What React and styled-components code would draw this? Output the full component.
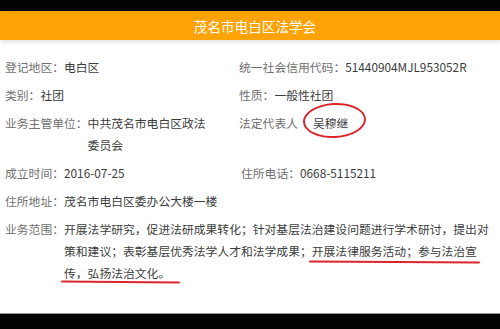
import React from "react";
import styled, { createGlobalStyle } from "styled-components";

const GlobalStyle = createGlobalStyle`
  html, body {
    margin: 0;
    padding: 0;
    background: #000;
  }
  body {
    font-family: "Noto Sans CJK SC", "Noto Sans", sans-serif;
  }
`
const Page = styled.div`
  display: flex;
  flex-direction: column;
  width: 500px;
  height: 329px;
  overflow: hidden;
  background: #000;
`
const TopBar = styled.div`
  height: 11px;
  background: #030303;
  flex-shrink: 0;
`
const Header = styled.div`
  position: relative;
  z-index: 2;
  display: flex;
  align-items: center;
  justify-content: center;
  height: 29px;
  flex-shrink: 0;
  background: #ffa204;
  box-shadow: 0 2px 4px rgba(0, 0, 0, 0.12);
  color: #fff;
  font-size: 13.6px;
  padding-left: 10px;
`
const Content = styled.div`
  flex: 1;
  background: #fff;
  padding: 13px 0 0 5px;
  display: grid;
  grid-template-columns: 234px 1fr;
  align-content: start;
`
const BottomBar = styled.div`
  height: 15px;
  flex-shrink: 0;
  border-top: 1px solid #9a9a9a;
  background: #030303;
`
const Field = styled.div`
  display: flex;
  padding: 3px 0;
  padding-left: ${({shift}) => shift || 0}px;
  grid-column: ${({wide}) => (wide ? "1 / span 2" : "auto")};
  font-size: 11.8px;
  line-height: 22px;
  white-space: nowrap;
`
const Label = styled.span`
  color: #6f6f6f;
  margin-right: ${({gap}) => gap || 0}px;
  flex-shrink: 0;
`
const Value = styled.span`
  color: #3c3c3c;
  display: flex;
  flex-direction: column;
`
const Circled = styled.span`
  position: relative;
  &::before {
    content: "";
    position: absolute;
    left: -10px;
    right: -18px;
    top: -9px;
    bottom: -4px;
    border: 2px solid #d8262c;
    border-radius: 50%;
    transform: rotate(-3deg);
  }
`
const Marked = styled.span`
  position: relative;
  &::after {
    content: "";
    position: absolute;
    left: ${({l}) => l}px;
    right: ${({r}) => r}px;
    bottom: ${({b}) => b}px;
    height: 2px;
    border-radius: 2px;
    background: #d8262c;
    transform: rotate(${({tilt}) => tilt}deg);
  }
`

const App = () => {
    return (<Page>
        <GlobalStyle/>
        <TopBar/>
        <Header>{'茂名市电白区法学会'}</Header>
        <Content>
            <Field>
                <Label>{'登记地区：'}</Label>
                <Value>{'电白区'}</Value>
            </Field>
            <Field>
                <Label>{'统一社会信用代码：'}</Label>
                <Value>{'51440904MJL953052R'}</Value>
            </Field>
            <Field>
                <Label>{'类别：'}</Label>
                <Value>{'社团'}</Value>
            </Field>
            <Field>
                <Label>{'性质：'}</Label>
                <Value>{'一般性社团'}</Value>
            </Field>
            <Field>
                <Label>{'业务主管单位：'}</Label>
                <Value>
                    <span>{'中共茂名市电白区政法'}</span>
                    <span>{'委员会'}</span>
                </Value>
            </Field>
            <Field>
                <Label gap={15}>{'法定代表人'}</Label>
                <Value><Circled>{'吴穆继'}</Circled></Value>
            </Field>
            <Field>
                <Label>{'成立时间：'}</Label>
                <Value>{'2016-07-25'}</Value>
            </Field>
            <Field shift={2}>
                <Label>{'住所电话：'}</Label>
                <Value>{'0668-5115211'}</Value>
            </Field>
            <Field wide>
                <Label>{'住所地址：'}</Label>
                <Value>{'茂名市电白区委办公大楼一楼'}</Value>
            </Field>
            <Field wide>
                <Label>{'业务范围：'}</Label>
                <Value>
                    <span>{'开展法学研究，促进法研成果转化；针对基层法治建设问题进行学术研讨，提出对'}</span>
                    <span>
                        {'策和建议；表彰基层优秀法学人才和法学成果；'}
                        <Marked l={-3} r={-3} b={-4} tilt={0.3}>{'开展法律服务活动；参与法治宣'}</Marked>
                    </span>
                    <span>
                        <Marked l={-3} r={-10} b={-2} tilt={0.6}>{'传，弘扬法治文化。'}</Marked>
                    </span>
                </Value>
            </Field>
        </Content>
        <BottomBar/>
    </Page>)
}

export default App;
